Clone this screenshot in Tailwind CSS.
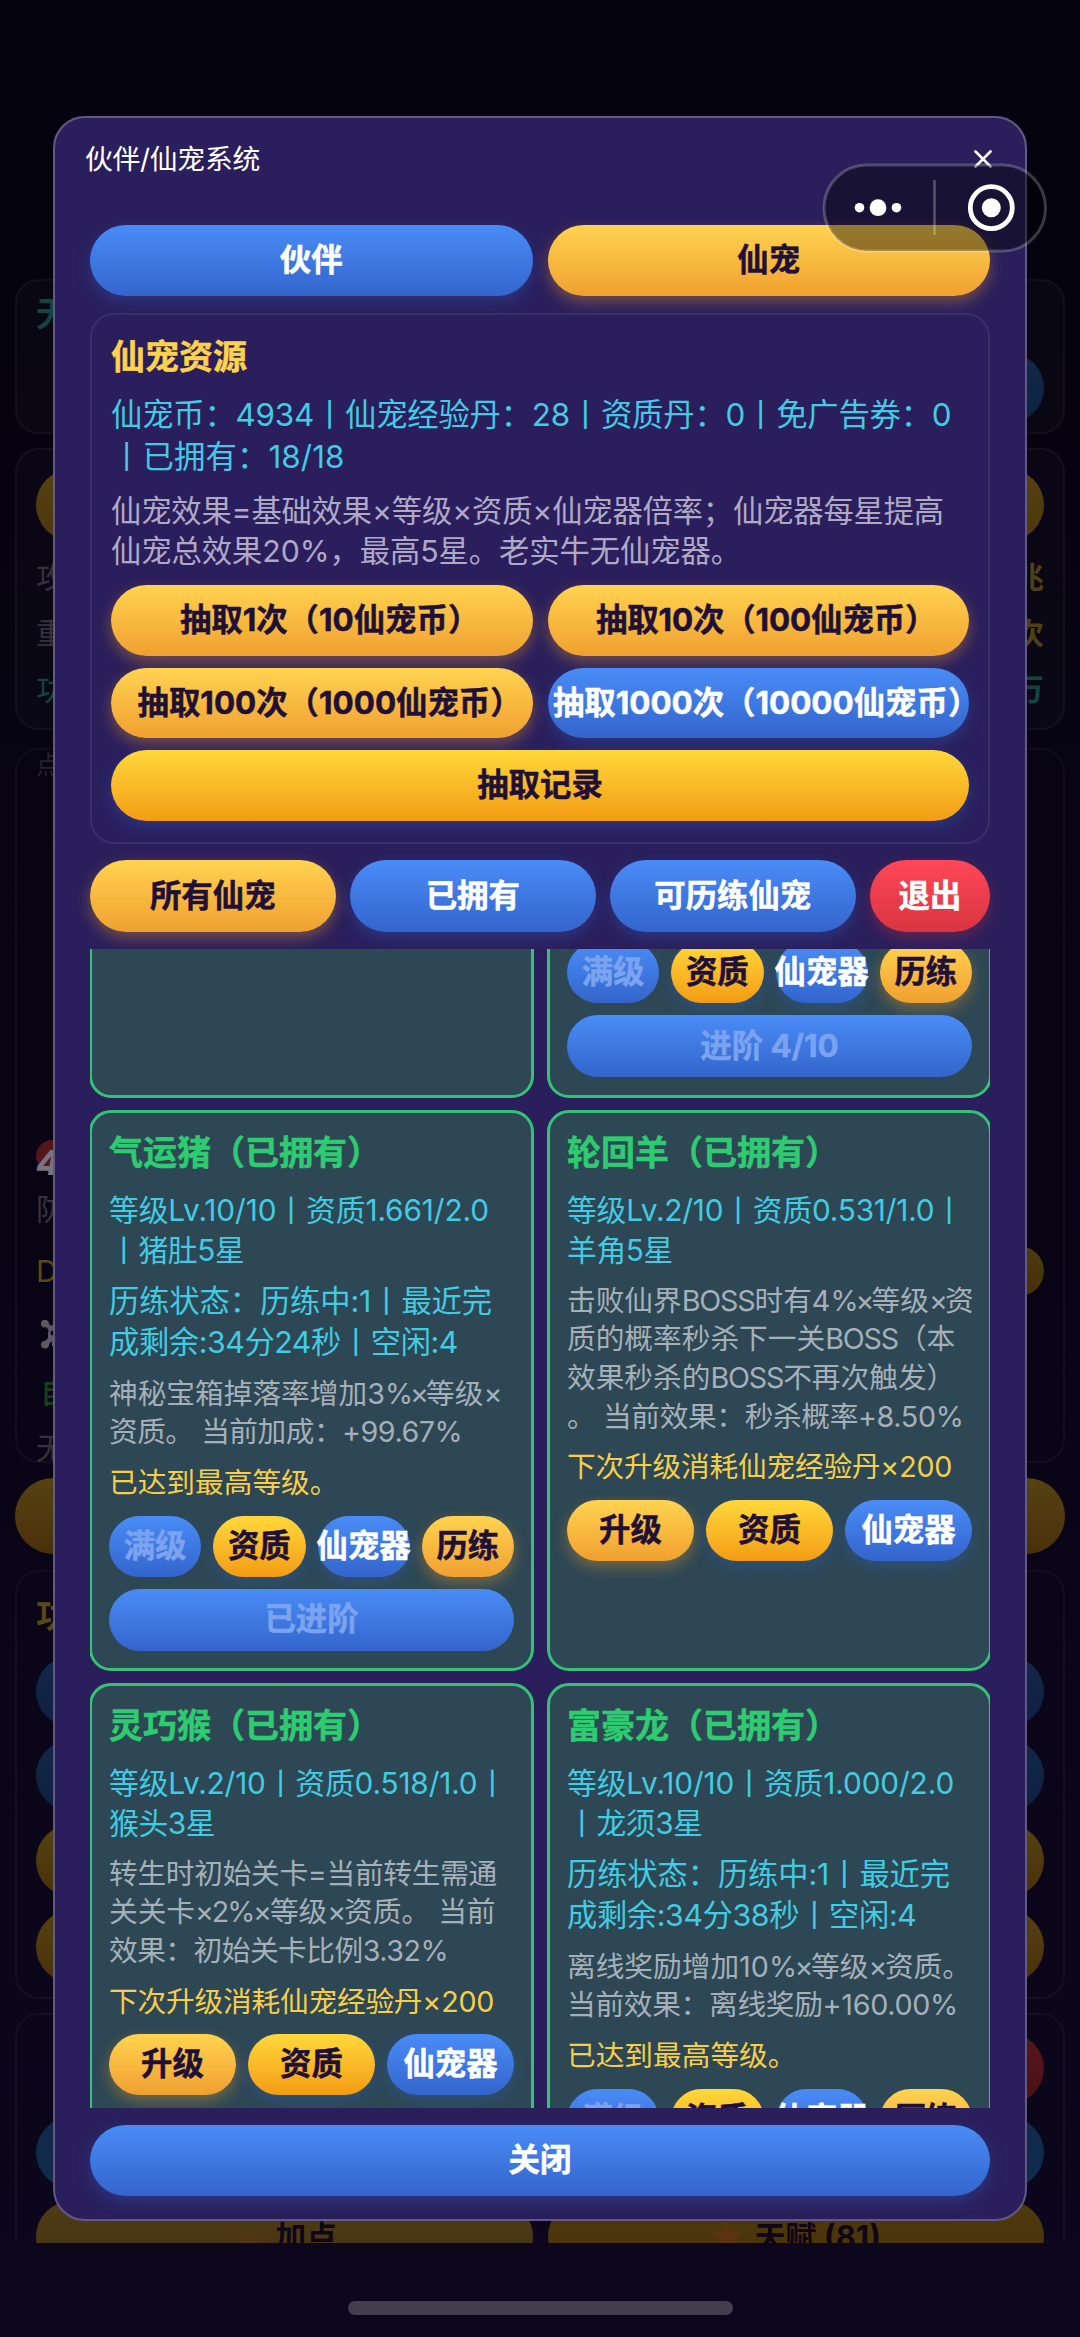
<!DOCTYPE html>
<html lang="zh-CN">
<head>
<meta charset="utf-8">
<title>伙伴/仙宠系统</title>
<script src="https://cdn.jsdelivr.net/npm/@tailwindcss/browser@4"></script>
</head>
<body class="bg-[#05030e] overflow-hidden">
<div class="relative w-[1080px] h-[2337px] overflow-hidden font-[Inter,'Noto_Sans_CJK_SC',sans-serif] whitespace-nowrap bg-linear-to-b from-[#05020f] via-[#080414] to-[#0d071d]">

  <!-- dimmed game page behind the dialog -->
  <div class="h-[2243px] overflow-hidden px-[15px] pt-[279px] text-[30px] leading-[56px] text-[#35323d]">
    <section class="h-[155px] rounded-3xl border-2 border-white/4 bg-white/2 px-[19px] pt-2">
      <h2 class="text-[34px] font-bold leading-[50px] text-[#124541]">无尽</h2>
      <div class="mt-3.5 ml-auto h-[70px] w-[200px] rounded-full bg-linear-to-b from-[#102a47] to-[#0d2240]"></div>
    </section>
    <section class="mt-3.5 h-[282px] rounded-3xl border-2 border-white/4 bg-white/2 px-[19px] pt-[19px]">
      <div class="h-[72px] rounded-full bg-linear-to-b from-[#554212] to-[#4d360c]"></div>
      <div class="mt-2 flex justify-between"><span>攻击</span><b class="text-[#4d4015]">兆</b></div>
      <div class="flex justify-between"><span>重生</span><b class="text-[#4d4015]">次</b></div>
      <div class="flex justify-between text-[#124541]"><span>功德</span><b>万</b></div>
    </section>
    <section class="mt-[18px] h-[715px] rounded-3xl border-2 border-white/4 px-[19px]">
      <div class="h-[390px] text-[25px] leading-[30px] text-[#25222d]">点击</div>
      <div class="relative h-[42px] text-[34px] font-extrabold italic leading-[46px] text-[#77747c]"><span class="absolute left-0 top-0 size-8 rounded-full bg-[#54151b]"></span><span class="relative">4</span></div>
      <div class="leading-[54px]">防御</div>
      <div class="flex items-center justify-between leading-[70px] text-[#5a4818]"><span>DPS</span><span class="h-[50px] w-32 rounded-full bg-linear-to-b from-[#4d3b10] to-[#463009]"></span></div>
      <svg class="ml-1 mt-3 size-8" viewBox="0 0 32 32" fill="#5c5962"><path d="M1 5a3.500 3.500 0 0 1 4-3 3.500 3.500 0 0 1 4 4L27 24a3.500 3.500 0 1 1-3 4L6 9a3.500 3.500 0 0 1-5-4M1 27a3.500 3.500 0 0 1 4-4L24 4a3.500 3.500 0 1 1 4 4L9 26a3.500 3.500 0 1 1-8 1"/><path d="M8 15a10 10 0 0 1 20 0v6l-4 2v5H12v-5l-4-2z"/><circle cx="13" cy="15" r="2.500" fill="#0a0614"/><circle cx="22" cy="15" r="2.500" fill="#0a0614"/></svg>
      <div class="mt-3.5 pl-1 font-medium text-[#15401f]">自动</div>
      <div>无</div>
    </section>
    <div class="mt-[15px] h-[76px] rounded-full bg-linear-to-b from-[#554212] to-[#4a300a]"></div>
    <section class="mt-4 h-[429px] rounded-3xl border-2 border-white/4 px-[19px] pt-4">
      <h2 class="text-[34px] font-bold text-[#5a4818]">功能</h2>
      <div class="mt-3 flex flex-col gap-[13px]">
        <div class="h-[71px] rounded-full bg-linear-to-b from-[#12284a] to-[#0f2040]"></div>
        <div class="h-[71px] rounded-full bg-linear-to-b from-[#12284a] to-[#0f2040]"></div>
        <div class="h-[73px] rounded-full bg-linear-to-b from-[#554212] to-[#4a300a]"></div>
        <div class="h-[73px] rounded-full bg-linear-to-b from-[#554212] to-[#4a300a]"></div>
      </div>
    </section>
    <section class="mt-3.5 h-[400px] rounded-3xl border-2 border-white/4 px-[19px] pt-[18px]">
      <div class="ml-auto h-[71px] w-[200px] rounded-full bg-linear-to-b from-[#55161d] to-[#4a1116]"></div>
      <div class="mt-[13px] h-[71px] rounded-full bg-linear-to-b from-[#12284a] to-[#0f2d4d]"></div>
      <div class="mt-[13px] grid grid-cols-2 gap-[15px] text-[31px] font-bold leading-[71px] text-[#0d0716]">
        <div class="flex h-[71px] items-center justify-center gap-3 rounded-full bg-linear-to-b from-[#4d3d17] to-[#47300f]">
          <svg class="size-8" viewBox="0 0 32 32" fill="#4e3612" stroke="#5c3514"><path d="M18 5l3.500 9.500L31 18l-9.500 3.500L18 31l-3.500-9.500L5 18l9.500-3.500z"/><circle cx="5" cy="8" r="3.500" fill="none"/></svg>加点
        </div>
        <div class="flex h-[71px] items-center justify-center gap-3 rounded-full bg-linear-to-b from-[#4f3b0c] to-[#483008]">
          <svg class="size-8" viewBox="0 0 32 32" fill="#5a3410" stroke="#5a3410" stroke-width="2" stroke-linejoin="round"><path d="M16 3l4 8 9 1-6 7 2 10-9-5-9 5 2-10-6-7 9-1z"/></svg>天赋 (81)
        </div>
      </div>
    </section>
  </div>

  <!-- dialog -->
  <main class="absolute left-[53px] top-[116px] flex h-[2105px] w-[974px] flex-col rounded-[32px] border-2 border-[#635a83] bg-[#2a1f5c] px-[35px] text-[31.4px] text-white">
    <header class="-mx-[5px] flex h-[107px] items-start justify-between pt-[21px] text-[27.8px] leading-10">
      <h1 class="tracking-[-0.26px]">伙伴/仙宠系统</h1>
      <svg class="mt-[11px] mr-[3px] size-[18px]" viewBox="0 0 18 18" stroke="#fff" stroke-width="2.6" stroke-linecap="round"><path d="M1.5 1.5l15 15M16.500 1.500l-15 15"/></svg>
    </header>

    <nav class="grid grid-cols-2 gap-[15px] text-center font-bold leading-[71px] [-webkit-text-stroke-width:0.5px]">
      <button class="h-[71px] rounded-full bg-linear-to-b from-[#4a8cf7] to-[#3365cc] shadow-[0_6px_15px_#3365cc50]">伙伴</button>
      <button class="h-[71px] rounded-full bg-linear-to-b from-[#ffd350] to-[#f0a030] text-[#1f1038] shadow-[0_6px_15px_#f0a03060]">仙宠</button>
    </nav>

    <section class="mt-[17px] h-[531px] rounded-3xl border-2 border-white/8 px-[19px] pt-[19px]">
      <h2 class="text-[34px] font-bold leading-[46px] text-[#ffd24d] [-webkit-text-stroke-width:0.5px]">仙宠资源</h2>
      <div class="mt-3.5 leading-[42.300px] text-[#42cbe2]">
        <p class="tracking-[-0.26px]">仙宠币：4934丨仙宠经验丹：28丨资质丹：0丨免广告券：0</p>
        <p class="tracking-[0.1px]">丨已拥有：18/18</p>
      </div>
      <div class="mt-3 text-[30.300px] leading-[40.800px] text-[#afa9c6]">
        <p class="tracking-[-0.16px]">仙宠效果=基础效果×等级×资质×仙宠器倍率；仙宠器每星提高</p>
        <p class="tracking-[-0.05px]">仙宠总效果20%，最高5星。老实牛无仙宠器。</p>
      </div>
      <div class="mt-[13px] grid grid-cols-2 gap-x-[15px] gap-y-3 font-bold leading-[71px] text-[#1f1038] [-webkit-text-stroke-width:0.5px]">
        <button class="flex h-[70.500px] justify-center rounded-full bg-linear-to-b from-[#ffd350] to-[#f0a030] shadow-[0_6px_15px_#f0a03060]"><span class="-mr-[0.5em]">抽取1次（10仙宠币）</span></button>
        <button class="flex h-[70.500px] justify-center rounded-full bg-linear-to-b from-[#ffd350] to-[#f0a030] shadow-[0_6px_15px_#f0a03060]"><span class="-mr-[0.5em] tracking-[-0.1px]">抽取10次（100仙宠币）</span></button>
        <button class="flex h-[70.500px] justify-center rounded-full bg-linear-to-b from-[#ffd350] to-[#f0a030] shadow-[0_6px_15px_#f0a03060]"><span class="-mr-[0.5em]">抽取100次（1000仙宠币）</span></button>
        <button class="flex h-[70.500px] justify-center rounded-full bg-linear-to-b from-[#4a8cf7] to-[#3365cc] text-white shadow-[0_6px_15px_#3365cc50]"><span class="-mr-[0.5em]">抽取1000次（10000仙宠币）</span></button>
        <button class="col-span-2 h-[70.500px] rounded-full bg-linear-to-b from-[#ffd83a] to-[#f39c12] shadow-[0_6px_15px_#3365cc50]">抽取记录</button>
      </div>
    </section>

    <nav class="mt-4 flex gap-[14.500px] text-center font-bold leading-[72px] [-webkit-text-stroke-width:0.5px]">
      <button class="h-[72px] w-[245.500px] rounded-full bg-linear-to-b from-[#ffd350] to-[#f0a030] text-[#1f1038] shadow-[0_6px_15px_#f0a03060]">所有仙宠</button>
      <button class="h-[72px] w-[245.500px] rounded-full bg-linear-to-b from-[#4a8cf7] to-[#3365cc] shadow-[0_6px_15px_#3365cc50]">已拥有</button>
      <button class="h-[72px] w-[245.500px] rounded-full bg-linear-to-b from-[#4a8cf7] to-[#3365cc] shadow-[0_6px_15px_#3365cc50]">可历练仙宠</button>
      <button class="h-[72px] flex-1 rounded-full bg-linear-to-b from-[#ff4757] to-[#d93441] shadow-[0_6px_15px_#d9344150]">退出</button>
    </nav>

    <!-- pet list, scrolled -->
    <div class="mt-[17px] h-[1159px] shrink-0 overflow-hidden">
      <div class="-mx-px -mt-[351px] grid grid-cols-[445px_445px] grid-rows-[500px_561px_561px] gap-x-[13px] gap-y-3">
        <article class="rounded-[22px] border-3 border-[#36c275] bg-[#2d4754]"></article>
        <article class="flex flex-col justify-end rounded-[22px] border-3 border-[#36c275] bg-[#2d4754] px-[17px] pb-[18px]">
          <div class="grid grid-cols-4 gap-3 text-center font-bold leading-[61px] text-[#1f1038] [-webkit-text-stroke-width:0.5px]">
            <button class="h-[61px] rounded-full bg-linear-to-b from-[#4a8cf7] to-[#3365cc] text-[#7ba3ef]">满级</button>
            <button class="h-[61px] rounded-full bg-linear-to-b from-[#ffd83a] to-[#f39c12] shadow-[0_6px_15px_#3365cc50]">资质</button>
            <button class="flex h-[61px] justify-center rounded-full bg-linear-to-b from-[#4a8cf7] to-[#3365cc] text-white shadow-[0_6px_15px_#3365cc50]">仙宠器</button>
            <button class="h-[61px] rounded-full bg-linear-to-b from-[#ffd350] to-[#f0a030] shadow-[0_6px_15px_#f0a03060]">历练</button>
            <button class="col-span-4 h-[62px] rounded-full bg-linear-to-b from-[#4a8cf7] to-[#3365cc] text-[#7ba3ef]">进阶 4/10</button>
          </div>
        </article>

        <article class="rounded-[22px] border-3 border-[#36c275] bg-[#2d4754] px-[17px] pt-[17px]">
          <h3 class="text-[34px] font-bold leading-[46px] text-[#2ecc71] [-webkit-text-stroke-width:0.5px]">气运猪（已拥有）</h3>
          <div class="mt-3.5 text-[29.800px] leading-[40.300px] text-[#42cbe2]">
            <p class="tracking-[-0.11px]">等级Lv.10/10丨资质1.661/2.0</p>
            <p class="tracking-[-0.4px]">丨猪肚5星</p>
          </div>
          <div class="mt-[10px] text-[30.300px] leading-[41px] text-[#42cbe2]">
            <p class="tracking-[-0.12px]">历练状态：历练中:1丨最近完</p>
            <p class="tracking-[-0.42px]">成剩余:34分24秒丨空闲:4</p>
          </div>
          <div class="mt-3 text-[28.700px] leading-[38.700px] text-[#a5b0b9]">
            <p>神秘宝箱掉落率增加3<span class="tracking-[-3px]">%×</span>等级<span class="tracking-[-3px]">×</span></p>
            <p class="tracking-[-0.5px]">资质。 当前加成：+99.67%</p>
          </div>
          <p class="mt-3 text-[28.700px] leading-[38.700px] text-[#f5cf4b]">已达到最高等级。</p>
          <div class="mt-[13px] grid grid-cols-4 gap-3 text-center font-bold leading-[61px] text-[#1f1038] [-webkit-text-stroke-width:0.5px]">
            <button class="h-[61px] rounded-full bg-linear-to-b from-[#4a8cf7] to-[#3365cc] text-[#7ba3ef]">满级</button>
            <button class="h-[61px] rounded-full bg-linear-to-b from-[#ffd83a] to-[#f39c12] shadow-[0_6px_15px_#3365cc50]">资质</button>
            <button class="flex h-[61px] justify-center rounded-full bg-linear-to-b from-[#4a8cf7] to-[#3365cc] text-white shadow-[0_6px_15px_#3365cc50]">仙宠器</button>
            <button class="h-[61px] rounded-full bg-linear-to-b from-[#ffd350] to-[#f0a030] shadow-[0_6px_15px_#f0a03060]">历练</button>
            <button class="col-span-4 h-[62px] rounded-full bg-linear-to-b from-[#4a8cf7] to-[#3365cc] text-[#7ba3ef]">已进阶</button>
          </div>
        </article>

        <article class="rounded-[22px] border-3 border-[#36c275] bg-[#2d4754] px-[17px] pt-[17px]">
          <h3 class="text-[34px] font-bold leading-[46px] text-[#2ecc71] [-webkit-text-stroke-width:0.5px]">轮回羊（已拥有）</h3>
          <div class="mt-3.5 text-[29.800px] leading-[40.300px] text-[#42cbe2]">
            <p class="tracking-[-0.22px]">等级Lv.2/10丨资质0.531/1.0丨</p>
            <p class="tracking-[-0.4px]">羊角5星</p>
          </div>
          <div class="mt-[11px] text-[28.700px] leading-[38.700px] text-[#a5b0b9]">
            <p>击败仙界<span class="tracking-[-1.200px]">BOSS</span>时有4<span class="tracking-[-3px]">%×</span>等级<span class="tracking-[-3px]">×</span>资</p>
            <p>质的概率秒杀下一关<span class="tracking-[-1.200px]">BOSS</span>（本</p>
            <p>效果秒杀的<span class="tracking-[-1.200px]">BOSS</span>不再次触发）</p>
            <p class="tracking-[-0.36px]">。 当前效果：秒杀概率+8.50%</p>
          </div>
          <p class="mt-3 text-[28.700px] leading-[38.700px] tracking-[-0.2px] text-[#f5cf4b]">下次升级消耗仙宠经验丹×200</p>
          <div class="mt-[13px] grid grid-cols-3 gap-3 text-center font-bold leading-[61px] text-[#1f1038] [-webkit-text-stroke-width:0.5px]">
            <button class="h-[61px] rounded-full bg-linear-to-b from-[#ffd350] to-[#f0a030] shadow-[0_6px_15px_#f0a03060]">升级</button>
            <button class="h-[61px] rounded-full bg-linear-to-b from-[#ffd83a] to-[#f39c12] shadow-[0_6px_15px_#3365cc50]">资质</button>
            <button class="h-[61px] rounded-full bg-linear-to-b from-[#4a8cf7] to-[#3365cc] text-white shadow-[0_6px_15px_#3365cc50]">仙宠器</button>
          </div>
        </article>

        <article class="rounded-[22px] border-3 border-[#36c275] bg-[#2d4754] px-[17px] pt-[17px]">
          <h3 class="text-[34px] font-bold leading-[46px] text-[#2ecc71] [-webkit-text-stroke-width:0.5px]">灵巧猴（已拥有）</h3>
          <div class="mt-3.5 text-[29.800px] leading-[40.300px] text-[#42cbe2]">
            <p class="tracking-[-0.17px]">等级Lv.2/10丨资质0.518/1.0丨</p>
            <p class="tracking-[-0.4px]">猴头3星</p>
          </div>
          <div class="mt-[11px] text-[28.700px] leading-[38.700px] text-[#a5b0b9]">
            <p class="tracking-[-0.28px]">转生时初始关卡=当前转生需通</p>
            <p>关关卡<span class="tracking-[-2.200px]">×2%×</span>等级<span class="tracking-[-2.200px]">×</span>资质。 当前</p>
            <p class="tracking-[-0.5px]">效果：初始关卡比例3.32%</p>
          </div>
          <p class="mt-3 text-[28.700px] leading-[38.700px] tracking-[-0.2px] text-[#f5cf4b]">下次升级消耗仙宠经验丹×200</p>
          <div class="mt-[13px] grid grid-cols-3 gap-3 text-center font-bold leading-[61px] text-[#1f1038] [-webkit-text-stroke-width:0.5px]">
            <button class="h-[61px] rounded-full bg-linear-to-b from-[#ffd350] to-[#f0a030] shadow-[0_6px_15px_#f0a03060]">升级</button>
            <button class="h-[61px] rounded-full bg-linear-to-b from-[#ffd83a] to-[#f39c12] shadow-[0_6px_15px_#3365cc50]">资质</button>
            <button class="h-[61px] rounded-full bg-linear-to-b from-[#4a8cf7] to-[#3365cc] text-white shadow-[0_6px_15px_#3365cc50]">仙宠器</button>
          </div>
        </article>

        <article class="rounded-[22px] border-3 border-[#36c275] bg-[#2d4754] px-[17px] pt-[17px]">
          <h3 class="text-[34px] font-bold leading-[46px] text-[#2ecc71] [-webkit-text-stroke-width:0.5px]">富豪龙（已拥有）</h3>
          <div class="mt-3.5 text-[29.800px] leading-[40.300px] text-[#42cbe2]">
            <p class="tracking-[-0.12px]">等级Lv.10/10丨资质1.000/2.0</p>
            <p class="tracking-[-0.4px]">丨龙须3星</p>
          </div>
          <div class="mt-[10px] text-[30.300px] leading-[41px] text-[#42cbe2]">
            <p class="tracking-[-0.12px]">历练状态：历练中:1丨最近完</p>
            <p class="tracking-[-0.38px]">成剩余:34分38秒丨空闲:4</p>
          </div>
          <div class="mt-3 text-[28.700px] leading-[38.700px] text-[#a5b0b9]">
            <p>离线奖励增加10<span class="tracking-[-2.500px]">%×</span>等级<span class="tracking-[-2.500px]">×</span>资质。</p>
            <p class="tracking-[-0.29px]">当前效果：离线奖励+160.00%</p>
          </div>
          <p class="mt-3 text-[28.700px] leading-[38.700px] text-[#f5cf4b]">已达到最高等级。</p>
          <div class="mt-[13px] grid grid-cols-4 gap-3 text-center font-bold leading-[61px] text-[#1f1038] [-webkit-text-stroke-width:0.5px]">
            <button class="h-[61px] rounded-full bg-linear-to-b from-[#4a8cf7] to-[#3365cc] text-[#7ba3ef]">满级</button>
            <button class="h-[61px] rounded-full bg-linear-to-b from-[#ffd83a] to-[#f39c12]">资质</button>
            <button class="flex h-[61px] justify-center rounded-full bg-linear-to-b from-[#4a8cf7] to-[#3365cc] text-white">仙宠器</button>
            <button class="h-[61px] rounded-full bg-linear-to-b from-[#ffd350] to-[#f0a030]">历练</button>
          </div>
        </article>
      </div>
    </div>

    <button class="mt-[17px] h-[71px] shrink-0 rounded-full bg-linear-to-b from-[#4a8cf7] to-[#3365cc] font-bold leading-[71px] shadow-[0_6px_15px_#3365cc50] [-webkit-text-stroke-width:0.5px]">关闭</button>
  </main>

  <!-- mini-program capsule -->
  <svg class="absolute left-[822px] top-[163px] h-[90px] w-[226px]" viewBox="0 0 226 90">
    <rect x="2" y="2" width="221.500" height="86" rx="43" fill="#000" fill-opacity=".42" stroke="#fff" stroke-opacity=".22" stroke-width="3"/>
    <path d="M112.500 17v55" stroke="#fff" stroke-opacity=".28" stroke-width="2.500"/>
    <g fill="#fff"><circle cx="37.500" cy="44.700" r="4.800"/><circle cx="56" cy="44.700" r="8.400"/><circle cx="74.500" cy="44.700" r="4.800"/><circle cx="169.300" cy="44.700" r="9.500"/></g>
    <circle cx="169.300" cy="44.700" r="21" fill="none" stroke="#fff" stroke-width="4.800"/>
  </svg>

  <!-- home indicator -->
  <div class="absolute left-[348px] top-[2301px] h-3.5 w-[385px] rounded-full bg-[#443d4f]"></div>
</div>
</body>
</html>
